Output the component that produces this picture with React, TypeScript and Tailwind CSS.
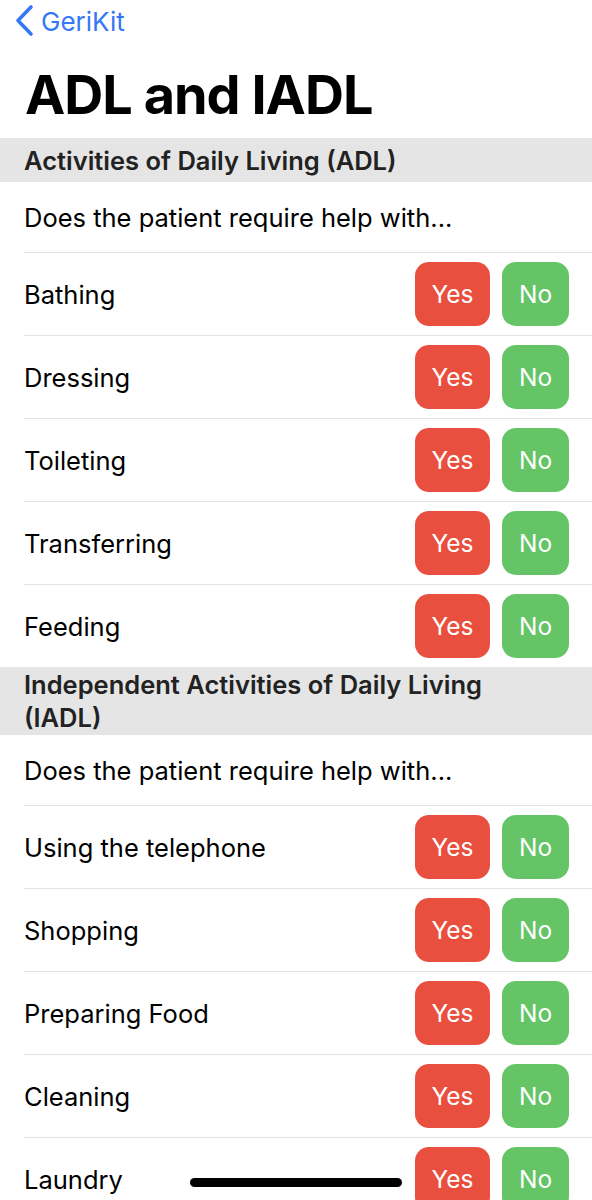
import type { ReactElement } from "react";

const adlItems = ["Bathing", "Dressing", "Toileting", "Transferring", "Feeding"];
const iadlItems = ["Using the telephone", "Shopping", "Preparing Food", "Cleaning", "Laundry"];

function SectionHeader({ title, tall }: { title: string; tall?: boolean }): ReactElement {
	return (
		<div
			className={`flex items-center bg-[#e5e5e5] pl-[24px] pr-[40px] text-[25.5px] font-semibold leading-[33px] text-[#222] ${
				tall ? "h-[68px]" : "h-[44px]"
			}`}
		>
			{title}
		</div>
	);
}

function QuestionRow({ label }: { label: string }): ReactElement {
	return (
		<div className="ml-[24px] flex h-[83px] items-center justify-between border-t border-[#e3e3e3] pr-[23px]">
			<span className="pt-[2px] text-[25.5px] text-black">{label}</span>
			<div className="flex gap-[12px]">
				<button className="flex h-[64px] w-[75px] items-center justify-center rounded-[14px] bg-[#e94f3e] text-[24.5px] text-white">
					Yes
				</button>
				<button className="flex h-[64px] w-[67px] items-center justify-center rounded-[14px] bg-[#64c466] text-[24.5px] text-white">
					No
				</button>
			</div>
		</div>
	);
}

function Section({ title, items, tall }: { title: string; items: string[]; tall?: boolean }): ReactElement {
	return (
		<section>
			<SectionHeader title={title} tall={tall} />
			<div className="flex h-[70px] items-center px-[24px] pt-[2px] text-[25.5px] text-black">
				Does the patient require help with...
			</div>
			{items.map((item) => (
				<QuestionRow key={item} label={item} />
			))}
		</section>
	);
}

export default function App(): ReactElement {
	return (
		<div className="min-h-screen bg-white font-['Inter','Liberation_Sans',sans-serif]">
			<nav className="flex h-[42px] items-center pl-[14px]">
				<svg width="20" height="33" viewBox="0 0 20 33" className="mt-[-1px]">
					<path d="M17 3 L4 16.5 L17 30" fill="none" stroke="#3478f6" strokeWidth="3.6" strokeLinecap="round" strokeLinejoin="round" />
				</svg>
				<span className="ml-[7px] text-[26px] text-[#3478f6]">GeriKit</span>
			</nav>
			<h1 className="h-[96px] pl-[25px] pt-[26px] text-[54px] font-bold leading-[54px] tracking-[-1px] text-black">
				ADL and IADL
			</h1>
			<Section title="Activities of Daily Living (ADL)" items={adlItems} />
			<Section title="Independent Activities of Daily Living (IADL)" items={iadlItems} tall />
			<div className="fixed bottom-[13px] left-1/2 h-[9px] w-[212px] -translate-x-1/2 rounded-full bg-black" />
		</div>
	);
}
